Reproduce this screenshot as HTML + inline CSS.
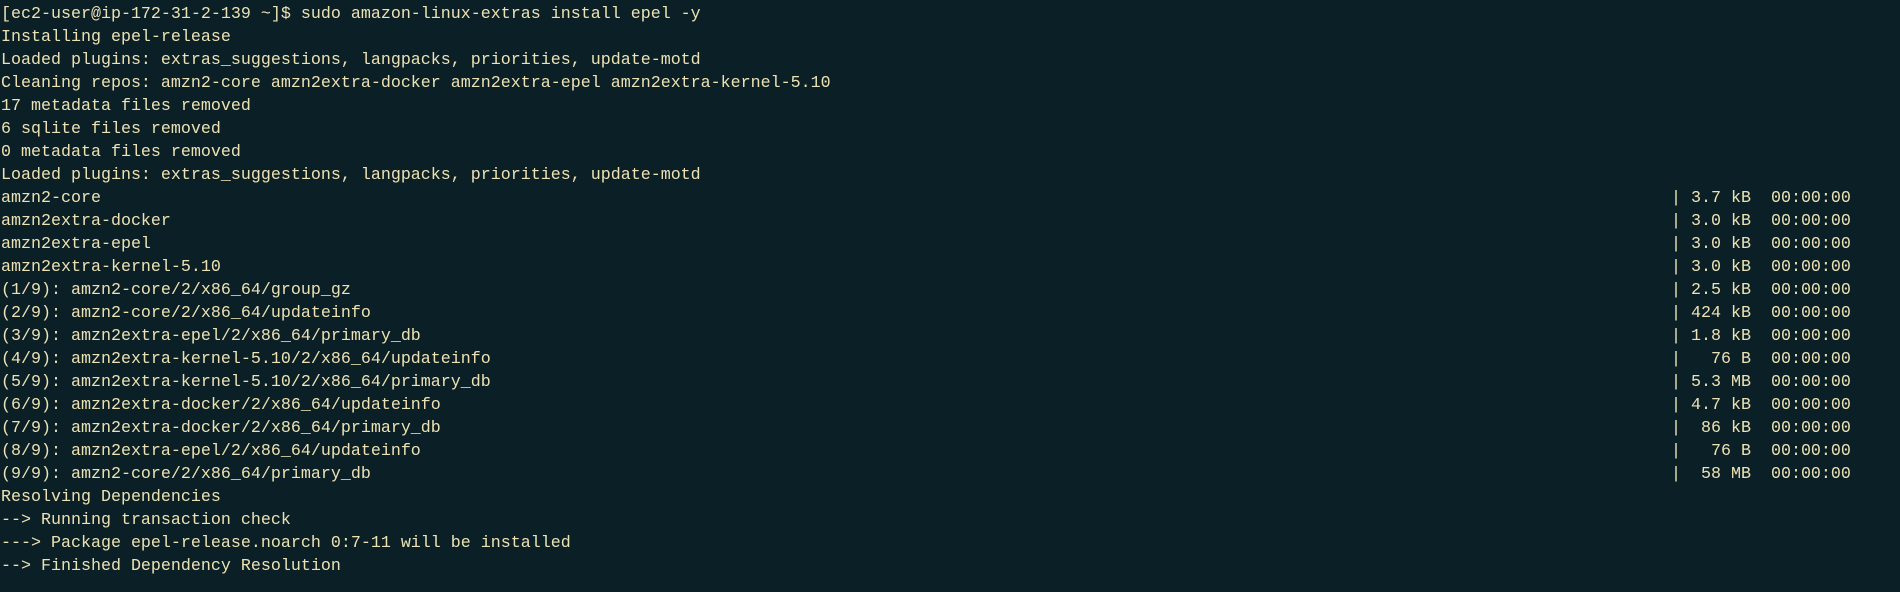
<!DOCTYPE html>
<html><head><meta charset="utf-8"><style>
html,body{margin:0;padding:0;background:#0b1f26;width:1900px;height:592px;overflow:hidden}
.t{position:absolute;left:1px;top:3px;font-family:"Liberation Mono",monospace;font-size:16.67px;line-height:23px;color:#ece2b4}
.l{position:relative;height:23px;white-space:pre}
.r{position:absolute;left:1670px;top:0}
</style></head><body><div class="t"><div class="l">[ec2-user@ip-172-31-2-139 ~]$ sudo amazon-linux-extras install epel -y</div><div class="l">Installing epel-release</div><div class="l">Loaded plugins: extras_suggestions, langpacks, priorities, update-motd</div><div class="l">Cleaning repos: amzn2-core amzn2extra-docker amzn2extra-epel amzn2extra-kernel-5.10</div><div class="l">17 metadata files removed</div><div class="l">6 sqlite files removed</div><div class="l">0 metadata files removed</div><div class="l">Loaded plugins: extras_suggestions, langpacks, priorities, update-motd</div><div class="l">amzn2-core<span class="r">| 3.7 kB  00:00:00</span></div><div class="l">amzn2extra-docker<span class="r">| 3.0 kB  00:00:00</span></div><div class="l">amzn2extra-epel<span class="r">| 3.0 kB  00:00:00</span></div><div class="l">amzn2extra-kernel-5.10<span class="r">| 3.0 kB  00:00:00</span></div><div class="l">(1/9): amzn2-core/2/x86_64/group_gz<span class="r">| 2.5 kB  00:00:00</span></div><div class="l">(2/9): amzn2-core/2/x86_64/updateinfo<span class="r">| 424 kB  00:00:00</span></div><div class="l">(3/9): amzn2extra-epel/2/x86_64/primary_db<span class="r">| 1.8 kB  00:00:00</span></div><div class="l">(4/9): amzn2extra-kernel-5.10/2/x86_64/updateinfo<span class="r">|   76 B  00:00:00</span></div><div class="l">(5/9): amzn2extra-kernel-5.10/2/x86_64/primary_db<span class="r">| 5.3 MB  00:00:00</span></div><div class="l">(6/9): amzn2extra-docker/2/x86_64/updateinfo<span class="r">| 4.7 kB  00:00:00</span></div><div class="l">(7/9): amzn2extra-docker/2/x86_64/primary_db<span class="r">|  86 kB  00:00:00</span></div><div class="l">(8/9): amzn2extra-epel/2/x86_64/updateinfo<span class="r">|   76 B  00:00:00</span></div><div class="l">(9/9): amzn2-core/2/x86_64/primary_db<span class="r">|  58 MB  00:00:00</span></div><div class="l">Resolving Dependencies</div><div class="l">--&gt; Running transaction check</div><div class="l">---&gt; Package epel-release.noarch 0:7-11 will be installed</div><div class="l">--&gt; Finished Dependency Resolution</div></div></body></html>
